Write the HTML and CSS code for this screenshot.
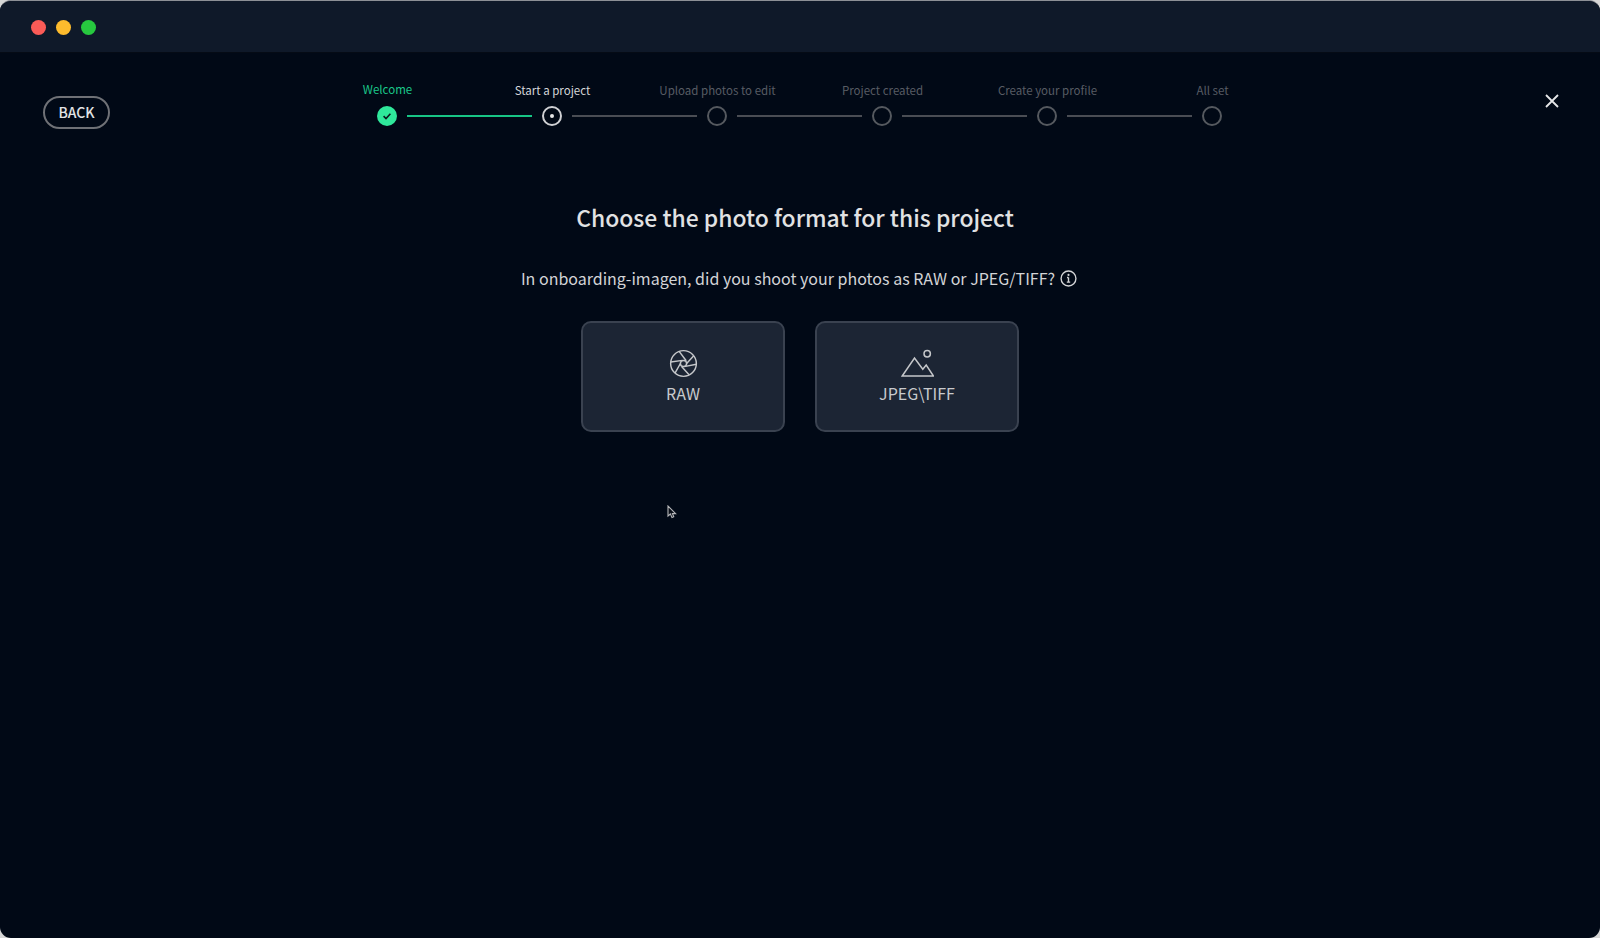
FILE: index.html
```html
<!DOCTYPE html>
<html lang="en">
<head>
<meta charset="utf-8">
<title>Choose the photo format</title>
<link rel="stylesheet" href="styles.css">
</head>
<body>
<div class="window">
  <header class="titlebar">
    <span class="light light-red"></span>
    <span class="light light-yellow"></span>
    <span class="light light-green"></span>
  </header>
  <main class="content">
    <div class="topbar">
      <div class="topbar-left"><button class="back">BACK</button></div>
      <div class="stepper">
        <div class="labels">
          <span class="label label-done">Welcome</span>
          <span class="label label-current">Start a project</span>
          <span class="label">Upload photos to edit</span>
          <span class="label">Project created</span>
          <span class="label">Create your profile</span>
          <span class="label">All set</span>
        </div>
        <div class="track">
          <span class="node node-done">
            <svg class="check" viewBox="0 0 10 10"><path d="M1.6 5.2 4 7.5 8.4 2.8"/></svg>
          </span>
          <span class="line line-done"></span>
          <span class="node node-current"><span class="dot"></span></span>
          <span class="line"></span>
          <span class="node"></span>
          <span class="line"></span>
          <span class="node"></span>
          <span class="line"></span>
          <span class="node"></span>
          <span class="line"></span>
          <span class="node"></span>
        </div>
      </div>
      <div class="topbar-right">
        <svg class="close" viewBox="0 0 14 14"><path d="M1 1 13 13M13 1 1 13"/></svg>
      </div>
    </div>
    <h1 class="title">Choose the photo format for this project</h1>
    <p class="question">In onboarding-imagen, did you shoot your photos as RAW or JPEG/TIFF?
      <svg class="info" viewBox="0 0 16 16"><circle cx="8" cy="8" r="7"/><path d="M8 7v4.4M6.4 11.4h3.2M6.6 7h1.4"/><circle class="info-dot" cx="8" cy="4.6" r="1"/></svg>
    </p>
    <div class="cards">
      <div class="card">
        <svg class="card-icon" viewBox="0 0 30 30">
          <circle cx="15" cy="15" r="13.3"/>
          <circle cx="15" cy="15" r="3.2"/>
          <path d="M10.5 2.5 17.8 12.2M25.6 7 18.2 15M28.3 15.8 15.8 18.2M21 26.8 13 18M6.2 25 11.8 15M1.8 13.5 14 11.8"/>
        </svg>
        <span class="card-label">RAW</span>
      </div>
      <div class="card">
        <svg class="card-icon card-icon-wide" viewBox="0 0 33 30">
          <circle cx="26.2" cy="5.7" r="3.2"/>
          <path d="M1.2 28 13.5 10 21.8 21.3 25.2 17 32.5 28Z"/>
        </svg>
        <span class="card-label">JPEG\TIFF</span>
      </div>
    </div>
    <svg class="pointer" viewBox="0 0 10 14"><path d="M1 1V11L3.4 9 5 12.6 6.8 11.8 5.4 8.6H8.6Z"/></svg>
  </main>
</div>
</body>
</html>
```

FILE: styles.css
```css
* { box-sizing: border-box; }
html, body { margin: 0; height: 100%; }
body {
  background: #d6d6d6;
  font-family: "Noto Sans CJK JP", "Noto Sans", sans-serif;
  overflow: hidden;
}
.window {
  height: 938px;
  border-radius: 11px;
  overflow: hidden;
  background: #010916;
  display: flex;
  flex-direction: column;
  border-top: 1px solid #8d9096;
}
.titlebar {
  height: 52px;
  flex: none;
  background: #0f1929;
  border-bottom: 1px solid #050b15;
  display: flex;
  align-items: center;
  gap: 10px;
  padding: 2px 0 0 31px;
}
.light { width: 15px; height: 15px; border-radius: 50%; }
.light-red { background: #fb5b57; }
.light-yellow { background: #fdbb2d; }
.light-green { background: #27c83f; }
.content {
  position: relative;
  flex: 1;
  display: flex;
  flex-direction: column;
  align-items: center;
}
.topbar {
  width: 100%;
  display: grid;
  grid-template-columns: 1fr auto 1fr;
  padding: 28px 43px 0 43px;
}
.topbar-left { padding-top: 15px; }
.back {
  width: 67px;
  height: 33px;
  padding: 0 0 2px;
  background: none;
  border: 2px solid #6f7176;
  border-radius: 17px;
  color: #e2e3e5;
  font: 500 14px/1 "Noto Sans CJK JP", sans-serif;
}
.stepper { width: 990px; }
.labels {
  display: grid;
  grid-template-columns: repeat(6, 165px);
  height: 25px;
}
.label {
  text-align: center;
  font-size: 11.5px;
  line-height: 18px;
  color: #585c64;
  white-space: nowrap;
}
.label-done { color: #1bc78a; margin-top: -1px; }
.label-current { color: #d5d6d8; }
.track {
  display: flex;
  align-items: center;
  gap: 10px;
  padding: 0 73px 0 72px;
}
.node {
  flex: none;
  width: 20px;
  height: 20px;
  border-radius: 50%;
  border: 2px solid #55595f;
  display: flex;
  align-items: center;
  justify-content: center;
}
.node-done { background: #2fe89b; border: none; }
.node-current { border-color: #cfd0d3; }
.dot { width: 4px; height: 4px; border-radius: 50%; background: #e6e7e8; }
.check {
  width: 10px;
  height: 10px;
  fill: none;
  stroke: #0a1a1e;
  stroke-width: 1.6;
}
.line { flex: 1; height: 2px; background: #4a4d54; }
.line-done { background: #17c585; }
.topbar-right { display: flex; justify-content: flex-end; padding-top: 13px; margin-right: -2px; }
.close {
  width: 14px;
  height: 14px;
  fill: none;
  stroke: #e6e7e8;
  stroke-width: 1.8;
}
.title {
  margin: 70px 10px 0 0;
  font-size: 22.9px;
  font-weight: 500;
  line-height: 36px;
  color: #e1e2e3;
}
.question {
  margin: 30px 2px 0 0;
  display: flex;
  align-items: center;
  gap: 5px;
  font-size: 16px;
  line-height: 26px;
  color: #d3d4d6;
}
.info {
  width: 17px;
  height: 17px;
  fill: none;
  stroke: #d3d4d6;
  stroke-width: 1.3;
}
.info-dot { fill: #d3d4d6; stroke: none; }
.cards {
  display: flex;
  gap: 30px;
  margin-top: 30px;
}
.card {
  width: 204px;
  height: 111px;
  background: #1c2534;
  border: 2px solid #3a4250;
  border-radius: 10px;
  display: flex;
  flex-direction: column;
  align-items: center;
  padding-top: 26px;
}
.card-icon {
  width: 29px;
  height: 29px;
  fill: none;
  stroke: #c5c7ca;
  stroke-width: 1.5;
}
.card-icon-wide { width: 33px; height: 30px; margin-top: -1px; }
.card-label {
  margin-top: 3px;
  font-size: 16px;
  line-height: 24px;
  color: #c8cacd;
}
.pointer {
  position: absolute;
  left: 667px;
  top: 452px;
  width: 10px;
  height: 14px;
  fill: #0a0f18;
  stroke: #b5b6b9;
  stroke-width: 1.1;
}
```
